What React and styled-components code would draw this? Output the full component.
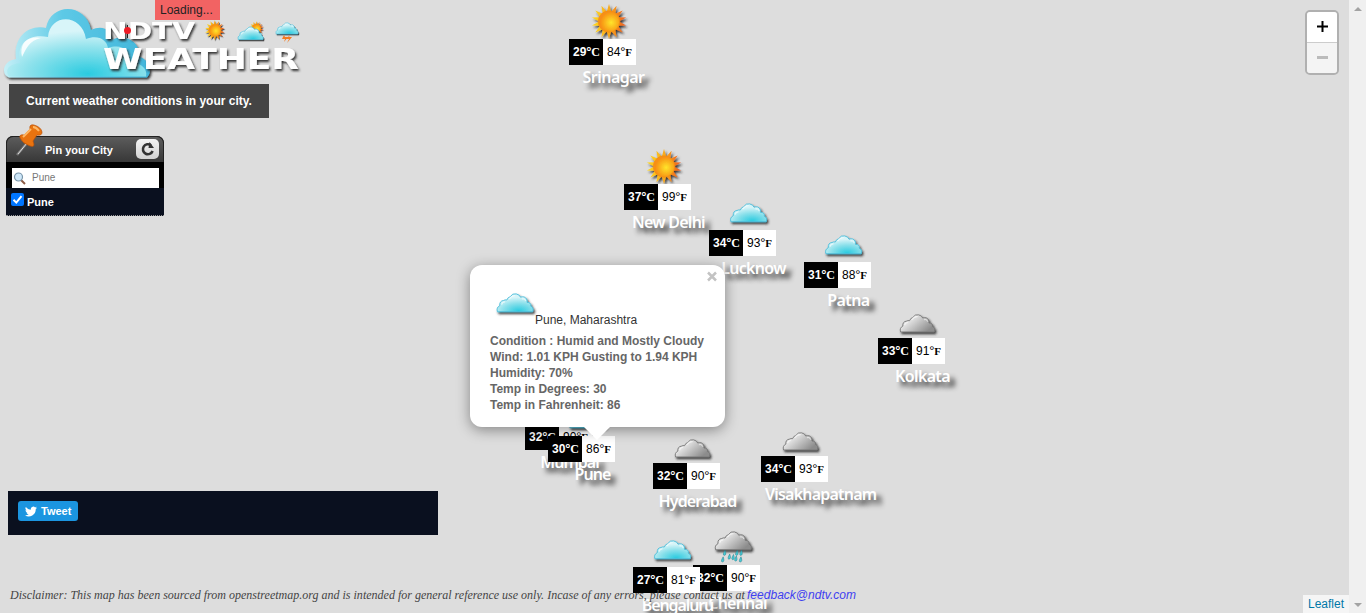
import React from "react";
import styled, { createGlobalStyle } from "styled-components";

const Global = createGlobalStyle`
  body { margin: 0; overflow: hidden; font: 12px/18px "Liberation Sans", Arial, sans-serif; color: #333; }
  * { box-sizing: border-box; }
  svg { display: block; overflow: visible; }
`;

const Shell = styled.div`
  display: grid;
  grid-template-columns: 1fr 17px;
  height: 613px;
`;
const Stage = styled.main`
  position: relative;
  overflow: hidden;
  background: #ddd;
  display: flex;
  justify-content: space-between;
`;
const ScrollTrack = styled.div`
  background: #f0f0f0;
  display: flex;
  flex-direction: column;
  justify-content: space-between;
  align-items: center;
  padding: 7px 0 6px;
`;
const Arrow = styled.i`
  border: 4px solid transparent;
  border-width: ${(p) => (p.$down ? "4px 4px 0" : "0 4px 4px")};
  border-top-color: ${(p) => (p.$down ? "#a3a3a3" : "transparent")};
  border-bottom-color: ${(p) => (p.$down ? "transparent" : "#a3a3a3")};
`;

const LeftColumn = styled.div`
  position: relative;
  z-index: 5;
  width: 870px;
  display: flex;
  flex-direction: column;
  align-items: flex-start;
`;
const Loading = styled.div`
  position: absolute;
  left: 155px;
  top: 0;
  z-index: 8;
  width: 65px;
  height: 20px;
  padding-left: 5px;
  line-height: 20px;
  letter-spacing: 0;
  color: #222;
  background: #f26363;
`;
const Tagline = styled.h2`
  margin: 0 0 0 9px;
  width: 260px;
  height: 34px;
  line-height: 34px;
  font-size: 12px;
  font-weight: bold;
  text-align: center;
  color: #fff;
  background: #444;
`;
const PinPanel = styled.section`
  margin: 18px 0 0 6px;
  width: 158px;
  height: 80px;
  display: flex;
  flex-direction: column;
  background: #000;
  border-radius: 7px 7px 0 0;
`;
const PinHeader = styled.header`
  height: 26px;
  flex: none;
  display: flex;
  align-items: center;
  justify-content: space-between;
  padding: 0 4px 0 7px;
  border: 1px solid #222;
  border-bottom: 0;
  border-radius: 7px 7px 0 0;
  background: linear-gradient(#5c5c5c, #373737);
`;
const PinTitle = styled.span`
  flex: 1;
  padding: 0 0 0 2px;
  font-size: 11px;
  font-weight: bold;
  color: #fff;
`;
const PinArt = styled.svg`
  width: 29px;
  height: 34px;
  margin-top: -20px;
`;
const RefreshButton = styled.button`
  width: 23px;
  height: 20px;
  padding: 0;
  margin-top: -1px;
  display: grid;
  place-items: center;
  border: 0;
  border-radius: 5px;
  background: linear-gradient(#f4f4f4, #d2d2d2);
`;
const SearchBox = styled.div`
  margin: 6px 5px 0 6px;
  height: 20px;
  flex: none;
  display: flex;
  align-items: center;
  gap: 6px;
  padding: 0 0 0 1px;
  background: #fff;
  font-size: 10px;
  color: #777;
`;
const CityRow = styled.label`
  flex: 1;
  display: flex;
  align-items: center;
  gap: 3px;
  padding: 0 0 4px 5px;
  background: #0a101f;
  border-bottom: 1px dotted #999;
  font-size: 11px;
  font-weight: bold;
  color: #fff;
  span { padding-top: 4px; }
`;
const CheckMark = styled.svg`
  width: 13px;
  height: 13px;
  border-radius: 2px;
  background: #0075ff;
`;
const SocialBar = styled.div`
  margin: 275px 0 0 8px;
  width: 430px;
  height: 44px;
  padding: 10px;
  background: #0a101f;
`;
const TweetButton = styled.a`
  width: 60px;
  height: 20px;
  display: flex;
  align-items: center;
  gap: 4px;
  padding-left: 7px;
  border-radius: 3px;
  background: #1b95e0;
  color: #fff;
  font-size: 11px;
  font-weight: bold;
`;
const Disclaimer = styled.p`
  margin: 51px 0 0 10px;
  display: flex;
  gap: 3px;
  white-space: nowrap;
  line-height: 18px;
  font-style: italic;
`;
const DisclaimerText = styled.span`
  width: 734px;
  font: italic 12px/18px "Liberation Serif", serif;
  letter-spacing: 0.005px;
  color: #444;
`;
const MailLink = styled.a`
  color: #4040f0;
  letter-spacing: 0.02px;
`;

const RightColumn = styled.div`
  position: relative;
  z-index: 5;
  display: flex;
  flex-direction: column;
  justify-content: space-between;
  align-items: flex-end;
  padding-top: 10px;
`;
const ZoomControl = styled.div`
  margin-right: 10px;
  width: 34px;
  border: 2px solid #b0b0b0;
  border-radius: 5px;
  overflow: hidden;
`;
const ZoomButton = styled.div`
  height: ${(p) => (p.$off ? 30 : 31)}px;
  padding-bottom: 2px;
  display: grid;
  place-items: center;
  background: ${(p) => (p.$off ? "#f4f4f4" : "#fff")};
  border-bottom: ${(p) => (p.$off ? "0" : "1px solid #ccc")};
`;
const Attribution = styled.div`
  width: 46px;
  height: 18px;
  line-height: 18px;
  text-align: center;
  background: rgba(255, 255, 255, 0.7);
  color: #0078a8;
`;

const MarkerRoot = styled.div`
  position: absolute;
  width: 90px;
  z-index: ${(p) => p.$z || 1};
`;
const IconSlot = styled.div`
  height: 40px;
  padding-left: 17px;
`;
const Temps = styled.div`
  display: flex;
`;
const Temp = styled.span`
  width: ${(p) => (p.$dark ? 34 : 33)}px;
  height: 26px;
  padding-left: 4px;
  line-height: 26px;
  white-space: nowrap;
  color: ${(p) => (p.$dark ? "#fff" : "#000")};
  background: ${(p) => (p.$dark ? "#000" : "#fff")};
  font-weight: ${(p) => (p.$dark ? "bold" : "normal")};
`;
const Degree = styled.span`
  font-size: 13px;
  line-height: 12px;
  letter-spacing: -0.4px;
`;
const Unit = styled.span`
  font-family: "Liberation Serif", serif;
  font-size: ${(p) => (p.$small ? 11 : 12)}px;
  font-weight: bold;
  letter-spacing: -0.3px;
`;
const CityName = styled.div`
  display: flex;
  justify-content: safe center;
  width: 81px;
  margin-left: 4px;
  font: 600 16px/24px "Noto Sans", sans-serif;
  letter-spacing: ${(p) => p.$track || 0}px;
  white-space: nowrap;
  color: #fff;
  text-shadow: 5px 5px 5px #333;
`;

const Popup = styled.div`
  position: absolute;
  left: 470px;
  top: 265px;
  z-index: 6;
  width: 255px;
  height: 162px;
  padding: 26px 20px;
  border-radius: 12px;
  background: #fff;
  box-shadow: 0 3px 14px rgba(0, 0, 0, 0.4);
`;
const PopupTip = styled.i`
  position: absolute;
  left: 113px;
  top: 161px;
  border: 14px solid transparent;
  border-top-color: #fff;
  border-bottom: 0;
`;
const PopupClose = styled.span`
  position: absolute;
  right: 8px;
  top: 7px;
`;
const PopupHead = styled.div`
  display: flex;
  align-items: flex-end;
  height: 38px;
  padding-left: 5px;
`;
const PopupCity = styled.span`
  line-height: 18px;
`;
const PopupBody = styled.div`
  padding-top: 4px;
  line-height: 16px;
  font-weight: bold;
  color: #666;
`;

const CLOUD =
  "M1 20.500 Q-.5 16 3.500 14 Q3 9 7.500 8.500 Q9 7.500 11 8 Q12 5 14.500 4.500 Q17 .5 21 1.500 Q25 2.500 25.500 5 Q30 3.500 32 7 Q33 9 32.500 10.500 Q37 10.500 36.500 14.500 Q40 16 38.500 20.500 Z";

function Defs() {
  return (
    <svg width="0" height="0" style={{ position: "absolute" }}>
      <defs>
        <radialGradient id="cyan" cx=".6" cy=".95" r=".75">
          <stop offset="0" stopColor="#2bcbe0" />
          <stop offset=".55" stopColor="#86dfea" />
          <stop offset="1" stopColor="#d6f4f8" />
        </radialGradient>
        <linearGradient id="grey" x1="0" y1="0" x2="1" y2=".6">
          <stop offset="0" stopColor="#bbb" />
          <stop offset=".35" stopColor="#e4e4e4" />
          <stop offset="1" stopColor="#8c8c8c" />
        </linearGradient>
        <radialGradient id="sunCore" cx=".6" cy=".55">
          <stop offset="0" stopColor="#ffe52b" />
          <stop offset="1" stopColor="#f78f12" />
        </radialGradient>
        <linearGradient id="sunRays">
          <stop offset="0" stopColor="#ffd91c" />
          <stop offset=".55" stopColor="#f8a51b" />
          <stop offset="1" stopColor="#ee5a1c" />
        </linearGradient>
        <filter id="drop" x="-20%" y="-20%" width="150%" height="160%">
          <feDropShadow dx="1.5" dy="2" stdDeviation=".9" floodColor="#222" floodOpacity=".9" />
        </filter>
      </defs>
    </svg>
  );
}

const RAYS = Array.from({ length: 28 }, (_, i) => {
  const r = i % 2 ? 10 : 17.5;
  const a = (i * Math.PI) / 14 - Math.PI / 2;
  return `${18 + r * Math.cos(a)},${18 + r * Math.sin(a)}`;
}).join(" ");

function SunShape() {
  return (
    <g filter="url(#drop)">
      <polygon points={RAYS} fill="url(#sunRays)" />
      <circle cx="18" cy="18" r="10.700" fill="url(#sunCore)" stroke="#f08c12" strokeWidth=".6" />
    </g>
  );
}
function CloudShape({ grey }) {
  return (
    <g filter="url(#drop)">
      <path d={CLOUD} fill={`url(#${grey ? "grey" : "cyan"})`} stroke={grey ? "#777" : "#4fbfdc"} strokeWidth="1" />
      <path d="M5.500 13 Q6 10 9 10 M13.500 7 Q16 3 20 3.500 M27 7 Q30 6 31 9" fill="none" stroke="#fff" strokeOpacity=".6" strokeWidth="1.200" />
    </g>
  );
}
function Drops() {
  return (
    <g fill="#49cbd6" stroke="#187684" strokeWidth=".5">
      {[[11, 21], [9, 28], [16, 25], [20, 25.5], [24, 21], [28.500, 21], [23, 27], [28, 28]].map(([x, y]) => (
        <path key={`${x}-${y}`} d={`M${x} ${y} q-3 5 -1 5.500 q3 0 1 -5.500z`} />
      ))}
    </g>
  );
}
function WeatherIcon({ kind }) {
  if (kind === "sun")
    return (
      <svg width="50" height="40">
        <g transform="translate(5 4.500)"><SunShape /></g>
      </svg>
    );
  const y = kind === "cyan" ? 12.5 : kind === "rain" ? 5.5 : 15.5;
  const x = kind === "cyan" ? 4 : 4.7;
  return (
    <svg width="50" height="40">
      <g transform={`translate(${x} ${y}) scale(${kind === "grey" ? 0.9 : 0.94})`}>
        <CloudShape grey={kind !== "cyan"} />
        {kind === "rain" && <Drops />}
      </g>
    </svg>
  );
}

function Logo() {
  const word = {
    fontFamily: '"DejaVu Sans", sans-serif',
    fontWeight: "bold",
    fill: "#fff",
    lengthAdjust: "spacingAndGlyphs",
    filter: "url(#drop)",
  };
  return (
    <svg width="310" height="84" viewBox="0 0 310 84">
      <defs>
        <linearGradient id="rim" x1="0" x2="1">
          <stop offset="0" stopColor="#c5f0f7" />
          <stop offset=".4" stopColor="#5dc9e6" />
          <stop offset="1" stopColor="#41b5da" />
        </linearGradient>
        <radialGradient id="body" cx=".58" cy=".95" r=".75">
          <stop offset="0" stopColor="#2bcbe0" />
          <stop offset=".6" stopColor="#8fe2ec" />
          <stop offset="1" stopColor="#d8f5f9" />
        </radialGradient>
      </defs>
      <g filter="url(#drop)">
        <path
          d="M9 77.500 C1 75 2 61 16 59 C13 39 27 24 46 28 C51 2 86 3 91 30 C104 24 111 31 112 40 C127 32 142 45 138 56 C150 60 153 71 147 77.500 Z"
          fill="url(#rim)"
        />
        <path
          d="M9 76.500 C4 69 10 64 20 63 C16 44 28 33 48 37 C50 13 82 13 86 39 C98 34 107 40 108 48 C122 43 131 51 130 61 C141 63 148 69 146 76.500 Z"
          fill="url(#body)"
        />
        <path d="M22 57 C19 44 27 35 41 38 C29 41 27 47 22 57Z" fill="#fff" fillOpacity=".85" />
      </g>
      <text x="103" y="38.500" fontSize="23" textLength="92" {...word}>NDTV</text>
      <path d="M127.500 25v13" stroke="#222" />
      <circle cx="127.500" cy="30.500" r="3.500" fill="#ee1c25" />
      <text x="103" y="69" fontSize="29" textLength="196" {...word}>WEATHER</text>
      <g transform="translate(204.500 20) scale(.57)"><SunShape /></g>
      <g transform="translate(249 21) scale(.41)"><SunShape /></g>
      <g transform="translate(237.500 26) scale(.66)"><CloudShape /></g>
      <g transform="translate(275.500 22) scale(.58)"><CloudShape /></g>
      <path d="M284 35l-2 4h3l-1 3 4-5h-3zM290 35l-4 4h3l-2 4 5-6h-3z" fill="#f47b20" />
    </svg>
  );
}

function Pushpin() {
  return (
    <PinArt viewBox="0 0 29 34">
      <path d="M13 20L3 32" stroke="#777" strokeWidth="2.600" />
      <path d="M13 20L4 31" stroke="#ddd" strokeWidth="1" />
      <path d="M6 15Q5 11 10 12L16 6Q15 1 20 2Q27 4 28 9Q28 13 23 12L19 18Q22 25 16 23Q8 20 6 15Z" fill="#e9730f" stroke="#b85008" strokeWidth=".7" />
      <path d="M9 14L17 6M19 4Q22 4 25 8" stroke="#ffb764" strokeWidth="2" fill="none" />
    </PinArt>
  );
}

const MARKERS = [
  { city: "Srinagar", c: 29, f: 84, x: 569, y: 39, icon: "sun", track: -0.55 },
  { city: "New Delhi", c: 37, f: 99, x: 624, y: 184, icon: "sun", track: -0.75 },
  { city: "Lucknow", c: 34, f: 93, x: 709, y: 230, icon: "cyan", track: -0.7 },
  { city: "Patna", c: 31, f: 88, x: 804, y: 262, icon: "cyan", track: -0.6 },
  { city: "Kolkata", c: 33, f: 91, x: 878, y: 338, icon: "grey", track: -0.65 },
  { city: "Mumbai", c: 32, f: 90, x: 525, y: 424, icon: "grey", track: -1 },
  { city: "Pune", c: 30, f: 86, x: 548, y: 436, icon: "cyan", track: -0.9, z: 2 },
  { city: "Hyderabad", c: 32, f: 90, x: 653, y: 463, icon: "grey", track: -0.85 },
  { city: "Visakhapatnam", c: 34, f: 93, x: 761, y: 456, icon: "grey", track: -0.8 },
  { city: "Chennai", c: 32, f: 90, x: 693, y: 565, icon: "rain", track: -0.8 },
  { city: "Bengaluru", c: 27, f: 81, x: 633, y: 567, icon: "cyan", track: -1.1, z: 2 },
];

function Marker({ m }) {
  return (
    <MarkerRoot $z={m.z} style={{ left: m.x, top: m.y - 40 }}>
      <IconSlot><WeatherIcon kind={m.icon} /></IconSlot>
      <Temps>
        <Temp $dark>{m.c}<Degree>°</Degree><Unit>C</Unit></Temp>
        <Temp>{m.f}<Degree>°</Degree><Unit $small>F</Unit></Temp>
      </Temps>
      <CityName $track={m.track}>{m.city}</CityName>
    </MarkerRoot>
  );
}

export default function App() {
  return (
    <Shell>
      <Global />
      <Stage>
        <Defs />
        {MARKERS.map((m) => <Marker key={m.city} m={m} />)}
        <LeftColumn>
          <Logo />
          <Tagline>Current weather conditions in your city.</Tagline>
          <PinPanel>
            <PinHeader>
              <Pushpin />
              <PinTitle>Pin your City</PinTitle>
              <RefreshButton>
                <svg width="16" height="16" viewBox="0 0 16 16">
                  <path d="M11 4.300A5 5 0 1 0 12.600 10" fill="none" stroke="#333" strokeWidth="2.600" />
                  <path d="M8.500 7H14L9.500 1z" fill="#333" />
                </svg>
              </RefreshButton>
            </PinHeader>
            <SearchBox>
              <svg width="13" height="13" viewBox="0 0 13 13">
                <path d="M8 8l4 4" stroke="#8a5a44" strokeWidth="2" />
                <circle cx="5.500" cy="5" r="4" fill="#cfe8fa" stroke="#7894a8" strokeWidth="1.200" />
              </svg>
              Pune
            </SearchBox>
            <CityRow>
              <CheckMark viewBox="0 0 13 13">
                <path d="M2.500 6.800l2.800 2.800 5.200-6.500" fill="none" stroke="#fff" strokeWidth="2" />
              </CheckMark>
              <span>Pune</span>
            </CityRow>
          </PinPanel>
          <SocialBar>
            <TweetButton>
              <svg width="12" height="11" viewBox="0 2 24 20" fill="#fff">
                <path d="M24 4.600a10 10 0 0 1-2.800.8 5 5 0 0 0 2.100-2.700 10 10 0 0 1-3.100 1.200 4.900 4.900 0 0 0-8.400 4.500A14 14 0 0 1 1.700 3.100a4.900 4.900 0 0 0 1.500 6.600 5 5 0 0 1-2.200-.6 4.900 4.900 0 0 0 3.900 4.900 5 5 0 0 1-2.200.1 4.900 4.900 0 0 0 4.600 3.400A10 10 0 0 1 0 19.500 14 14 0 0 0 21.500 7.100 10 10 0 0 0 24 4.600z" />
              </svg>
              Tweet
            </TweetButton>
          </SocialBar>
          <Disclaimer>
            <DisclaimerText>
              Disclaimer: This map has been sourced from openstreetmap.org and is intended for general reference use only. Incase of any errors, please contact us at
            </DisclaimerText>
            <MailLink>feedback@ndtv.com</MailLink>
          </Disclaimer>
        </LeftColumn>
        <RightColumn>
          <ZoomControl>
            <ZoomButton>
              <svg width="11" height="11"><path d="M0 5.500h11M5.500 0v11" stroke="#000" strokeWidth="2" /></svg>
            </ZoomButton>
            <ZoomButton $off>
              <svg width="11" height="3"><path d="M0 1.500h11" stroke="#bbb" strokeWidth="3" /></svg>
            </ZoomButton>
          </ZoomControl>
          <Attribution>Leaflet</Attribution>
        </RightColumn>
        <Loading>Loading...</Loading>
        <Popup>
          <PopupClose>
            <svg width="10" height="9" viewBox="0 0 10 9"><path d="M1 .5l8 8M9 .5l-8 8" stroke="#c3c3c3" strokeWidth="2.500" /></svg>
          </PopupClose>
          <PopupHead>
            <svg width="40" height="35">
              <g transform="translate(1.500 -1.500) scale(.94)"><CloudShape /></g>
            </svg>
            <PopupCity>Pune, Maharashtra</PopupCity>
          </PopupHead>
          <PopupBody>
            <div>Condition : Humid and Mostly Cloudy</div>
            <div>Wind: 1.01 KPH Gusting to 1.94 KPH</div>
            <div>Humidity: 70%</div>
            <div>Temp in Degrees: 30</div>
            <div>Temp in Fahrenheit: 86</div>
          </PopupBody>
          <PopupTip />
        </Popup>
      </Stage>
      <ScrollTrack>
        <Arrow />
        <Arrow $down />
      </ScrollTrack>
    </Shell>
  );
}
